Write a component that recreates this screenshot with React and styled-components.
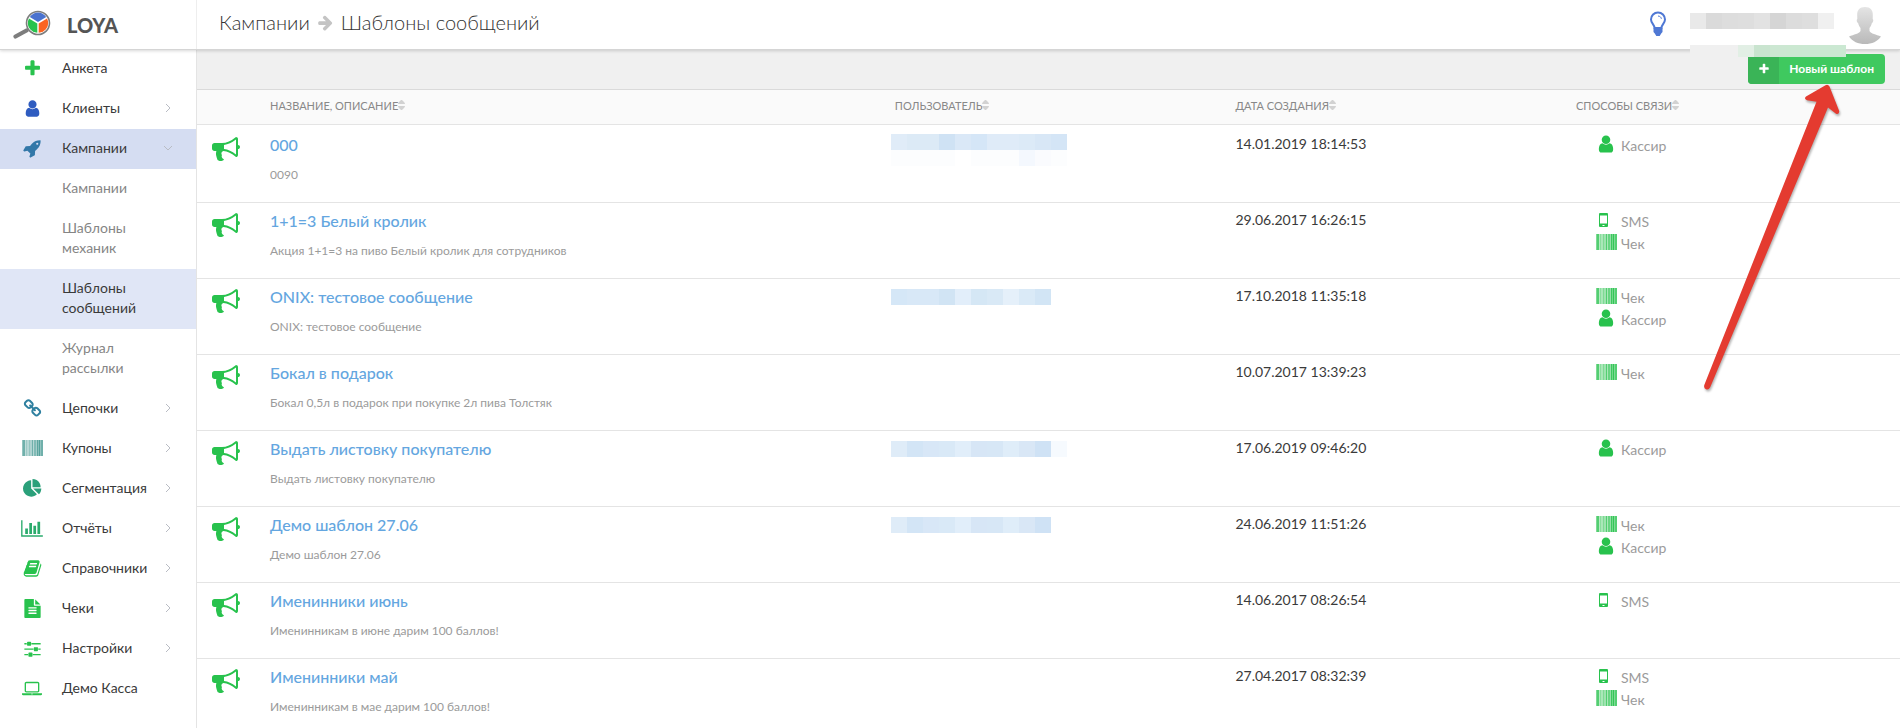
import React, { useState } from 'react';
import styled, { createGlobalStyle, css } from 'styled-components';

const colors = {
  green: '#28c24d',
  button: '#3fc95f',
  buttonDark: '#3ab457',
  link: '#64a6e0',
  text: '#3a3a3a',
  muted: '#9b9b9b',
  border: '#e4e4e4',
  grey: '#f0f0f0',
};

const GlobalStyle = createGlobalStyle`
  * {
    box-sizing: border-box;
  }

  body {
    margin: 0;
    background: #ffffff;
    color: ${colors.text};
    font-family: Lato, 'Open Sans', sans-serif;
    font-size: 14px;
    line-height: 20px;
  }

  a {
    color: inherit;
    text-decoration: none;
  }
`;

const glyphs = {
  plus: {
    path:
      'M1600 736v192q0 40-28 68t-68 28h-416v416q0 40-28 68t-68 28h-192q-40 0-68-28t-28-68v-416h-416q-40 0-68-28t-28-68v-192q0-40 28-68t68-28h416v-416q0-40 28-68t68-28h192q40 0 68 28t28 68v416h416q40 0 68 28t28 68z',
  },
  user: {
    path:
      'M1536 1399q0 109-62.5 187t-150.5 78h-854q-88 0-150.5-78t-62.5-187q0-85 8.5-160.5t31.5-152 58.5-131 94-89 134.5-34.5q131 128 313 128t313-128q76 0 134.5 34.5t94 89 58.5 131 31.5 152 8.5 160.5zm-256-887q0 159-112.5 271.5t-271.5 112.5-271.5-112.5-112.5-271.5 112.5-271.5 271.5-112.5 271.5 112.5 112.5 271.5z',
  },
  rocket: {
    path:
      'M1440 448q0-40-28-68t-68-28-68 28-28 68 28 68 68 28 68-28 28-68zm224-288q0 249-75.5 430.5t-253.5 360.5q-81 80-195 176l-20 379q-2 16-16 26l-384 224q-7 4-16 4-12 0-23-9l-64-64q-13-14-8-32l85-276-281-281-276 85q-3 1-9 1-14 0-23-9l-64-64q-17-19-5-39l224-384q10-14 26-16l379-20q96-114 176-195 188-187 358-258t431-71q14 0 24 9.5t10 22.5z',
  },
  link: {
    path:
      'M1520 1216q0-40-28-68l-208-208q-28-28-68-28-42 0-72 32 3 3 19 18.5t21.5 21.5 15 19 13 25.5 3.5 27.5q0 40-28 68t-68 28q-15 0-27.5-3.5t-25.5-13-19-15-21.5-21.5-18.5-19q-33 31-33 73 0 40 28 68l206 207q27 27 68 27 40 0 68-26l147-146q28-28 28-67zm-703-705q0-40-28-68l-206-207q-28-28-68-28-39 0-68 27l-147 146q-28 28-28 67 0 40 28 68l208 208q27 27 68 27 42 0 72-31-3-3-19-18.5t-21.5-21.5-15-19-13-25.5-3.5-27.5q0-40 28-68t68-28q15 0 27.5 3.5t25.5 13 19 15 21.5 21.5 18.5 19q33-31 33-73zm895 705q0 120-85 203l-147 146q-83 83-203 83-121 0-204-85l-206-207q-83-83-83-203 0-123 88-209l-88-88q-86 88-208 88-120 0-204-84l-208-208q-84-84-84-204t85-203l147-146q83-83 203-83 121 0 204 85l206 207q83 83 83 203 0 123-88 209l88 88q86-88 208-88 120 0 204 84l208 208q84 84 84 204z',
  },
  pie: {
    path:
      'M768 890l546 546q-106 108-247.5 168t-298.5 60q-209 0-385.5-103t-279.5-279.5-103-385.5 103-385.5 279.5-279.5 385.5-103v762zm187 6h773q0 157-60 298.5t-168 247.5zm709-128h-768v-768q209 0 385.5 103t279.5 279.5 103 385.5z',
  },
  bars: {
    width: 2048,
    path:
      'M640 896v512h-256v-512h256zm384-512v1024h-256v-1024h256zm1024 1152v128h-2048v-1536h128v1408h1920zm-640-896v768h-256v-768h256zm384-384v1152h-256v-1152h256z',
  },
  book: {
    path:
      'M1703 478q40 57 18 129l-275 906q-19 64-76.5 107.5t-122.5 43.5h-923q-77 0-148.5-53.5t-99.5-131.5q-24-67-2-127 0-4 3-27t4-37q1-8-3-21.5t-3-19.5q2-11 8-21t16.5-23.5 16.5-23.5q23-38 45-91.5t30-91.5q3-10 .5-30t-.5-28q3-11 17-28t17-23q21-36 42-92t25-90q1-9-2.5-32t.5-28q4-13 22-30.5t22-22.5q19-26 42.5-84.5t27.5-96.5q1-8-3-25.5t-2-26.5q2-8 9-18t18-23 17-21q8-12 16.5-30.5t15-35 16-36 19.5-32 26.5-23.5 36-11.5 47.5 5.5l-1 3q38-9 51-9h761q74 0 114 56t18 130l-274 906q-36 119-71.5 153.5t-128.5 34.5h-869q-27 0-38 15-11 16-1 43 24 70 144 70h923q29 0 56-15.5t35-41.5l300-987q7-22 5-57 38 15 59 43zm-1064 2q-4 13 2 22.5t20 9.5h608q13 0 25.5-9.5t16.5-22.5l21-64q4-13-2-22.5t-20-9.5h-608q-13 0-25.5 9.5t-16.5 22.5zm-83 256q-4 13 2 22.5t20 9.5h608q13 0 25.5-9.5t16.5-22.5l21-64q4-13-2-22.5t-20-9.5h-608q-13 0-25.5 9.5t-16.5 22.5z',
  },
  file: {
    path:
      'M1596 476q14 14 28 36h-472v-472q22 14 36 28zm-476 164h544v1056q0 40-28 68t-68 28h-1344q-40 0-68-28t-28-68v-1600q0-40 28-68t68-28h800v544q0 40 28 68t68 28zm160 736v-64q0-14-9-23t-23-9h-704q-14 0-23 9t-9 23v64q0 14 9 23t23 9h704q14 0 23-9t9-23zm0-256v-64q0-14-9-23t-23-9h-704q-14 0-23 9t-9 23v64q0 14 9 23t23 9h704q14 0 23-9t9-23zm0-256v-64q0-14-9-23t-23-9h-704q-14 0-23 9t-9 23v64q0 14 9 23t23 9h704q14 0 23-9t9-23z',
  },
  sliders: {
    path:
      'M480 1408v128h-352v-128h352zm352-128q26 0 45 19t19 45v256q0 26-19 45t-45 19h-256q-26 0-45-19t-19-45v-256q0-26 19-45t45-19h256zm160-384v128h-864v-128h864zm-640-512v128h-224v-128h224zm1312 1024v128h-736v-128h736zm-960-1152q26 0 45 19t19 45v256q0 26-19 45t-45 19h-256q-26 0-45-19t-19-45v-256q0-26 19-45t45-19h256zm640 512q26 0 45 19t19 45v256q0 26-19 45t-45 19h-256q-26 0-45-19t-19-45v-256q0-26 19-45t45-19h256zm320 128v128h-224v-128h224zm0-512v128h-864v-128h864z',
  },
  laptop: {
    width: 1920,
    path:
      'M416 1280q-66 0-113-47t-47-113v-704q0-66 47-113t113-47h1088q66 0 113 47t47 113v704q0 66-47 113t-113 47h-1088zm-32-864v704q0 13 9.5 22.5t22.5 9.5h1088q13 0 22.5-9.5t9.5-22.5v-704q0-13-9.5-22.5t-22.5-9.5h-1088q-13 0-22.5 9.5t-9.5 22.5zm1376 928h160v96q0 40-47 68t-113 28h-1600q-66 0-113-28t-47-68v-96h1760zm-720 96q16 0 16-16t-16-16h-160q-16 0-16 16t16 16h160z',
  },
  arrow: {
    path:
      'M1600 960q0 54-37 91l-651 651q-39 37-91 37-51 0-90-37l-75-75q-38-38-38-91t38-91l293-293h-704q-52 0-84.5-37.5t-32.5-90.5v-128q0-53 32.5-90.5t84.5-37.5h704l-293-294q-38-36-38-90t38-90l75-75q38-38 90-38 53 0 91 38l651 651q37 35 37 90z',
  },
  bullhorn: {
    path:
      'M1664 640q53 0 90.5 37.5t37.5 90.5-37.5 90.5-90.5 37.5v384q0 52-38 90t-90 38q-417-347-812-380-58 19-91 66t-31 100.5 40 92.5q-20 33-23 65.5t6 58 33.5 55 48 50 61.5 50.5q-29 58-111.5 83t-168.5 11.5-132-55.5q-7-23-29.5-87.5t-32-94.5-23-89-15-101 3.5-98.5 22-110.5h-122q-66 0-113-47t-47-113v-192q0-66 47-113t113-47h480q435 0 896-384 52 0 90 38t38 90v384zm-128 604v-954q-394 302-768 343v270q377 42 768 341z',
  },
};

const Glyph = ({ name, size }) => {
  const { path, width = 1792 } = glyphs[name];
  return (
    <svg
      width={Math.round((size * width) / 1792)}
      height={size}
      viewBox={`0 0 ${width} 1792`}
      fill="currentColor"
      aria-hidden="true"
    >
      <path d={path} />
    </svg>
  );
};

const stripes = [
  [0, 1, 0.6],
  [1, 2, 0.8],
  [3, 1, 0.35],
  [4, 1, 0.55],
  [5, 2, 0.4],
  [7, 1, 0.6],
  [8, 2, 0.45],
  [10, 1, 0.8],
  [11, 1, 0.4],
  [12, 2, 0.7],
  [14, 1, 0.5],
  [15, 1, 0.9],
  [16, 1, 0.65],
  [17, 1, 0.95],
  [18, 1, 0.6],
  [19, 2, 0.8],
];

const Barcode = () => (
  <svg width="21" height="16" viewBox="0 0 21 16" aria-hidden="true">
    {stripes.map(([x, width, opacity]) => (
      <rect
        key={x}
        x={x}
        width={width}
        height="16"
        fill="currentColor"
        opacity={opacity}
      />
    ))}
  </svg>
);

const Phone = () => (
  <svg width="9" height="14" viewBox="0 0 9 14" aria-hidden="true">
    <path
      d="M1 0h7q1 0 1 1v12q0 1-1 1h-7q-1 0-1-1v-12q0-1 1-1zM1 2.5v8h7v-8zM3.5 12v1h2v-1z"
      fill="currentColor"
      fillRule="evenodd"
    />
  </svg>
);

const Chevron = ({ open }) => (
  <svg width="10" height="10" viewBox="0 0 10 10" aria-hidden="true">
    <path
      d={open ? 'M1 3l4 4 4-4' : 'M3 1l4 4-4 4'}
      fill="none"
      stroke="#b9bcc4"
    />
  </svg>
);

const SortArrows = () => (
  <svg width="7" height="10" viewBox="0 0 7 10" aria-hidden="true">
    <path
      d="M0 4q0-1 1-2l2-2h1l2 2q1 1 1 2zM0 6h7q0 1-1 2l-2 2h-1l-2-2q-1-1-1-2z"
      fill="#d2d2d2"
    />
  </svg>
);

const Logo = () => (
  <svg width="38" height="30" viewBox="0 0 38 30" aria-hidden="true">
    <path
      d="M13.5 20.5L2.5 26.5"
      stroke="#7d7d7d"
      strokeWidth="4.2"
      strokeLinecap="round"
    />
    <circle
      cx="25"
      cy="13"
      r="11.5"
      fill="#fff"
      stroke="#7d7d7d"
      strokeWidth="1.6"
    />
    <path d="M25 12L16.8 7a9.7 9.7 0 0 1 16.4 0z" fill="#4a72cf" />
    <path d="M24.3 13.4v9.3a9.7 9.7 0 0 1-8.3-14.3z" fill="#28c24d" />
    <path d="M25.7 13.4v9.3a9.7 9.7 0 0 0 8.3-14.3z" fill="#fb6421" />
  </svg>
);

const Bulb = () => (
  <svg width="18" height="26" viewBox="0 0 18 26" aria-hidden="true">
    <path
      d="M9 1.500a7 7 0 0 0-7 7c0 3.500 3.300 5 3.600 8.500h6.800c.3-3.500 3.600-5 3.600-8.500A7 7 0 0 0 9 1.500z"
      fill="none"
      stroke="#4f78d4"
      strokeWidth="2"
    />
    <path d="M9 5c2 .2 3.200 1.200 3.400 2.800" fill="none" stroke="#4f78d4" />
    <path
      d="M4.500 16.500h9v4.500l-1.300 1.500-1.500 2.500H7.300L5.800 22.500 4.500 21z"
      fill="#4f78d4"
    />
  </svg>
);

const Avatar = () => (
  <svg width="34" height="38" viewBox="0 0 34 38" aria-hidden="true">
    <defs>
      <linearGradient id="avatar" x1="0" y1="0" x2="0" y2="1">
        <stop offset="0" stopColor="#e4e4e4" />
        <stop offset="1" stopColor="#b9b9b9" />
      </linearGradient>
    </defs>
    <path
      d="M17 0c5.500 0 8 3 7.800 8.500l-.1 3.500c1 .5.700 3.500-.9 4.200-.5 2.300-1.300 3.600-2.300 4.800v3c1.500 2.800 6.500 3.500 11.500 5.500-3.500 5-9 7.500-16 7.500S4.500 34.500 1 29.500c5-2 10-2.700 11.500-5.500v-3c-1-1.200-1.800-2.500-2.300-4.800-1.600-.7-1.900-3.700-.9-4.200l-.1-3.500C9 3 11.500 0 17 0z"
      fill="url(#avatar)"
    />
  </svg>
);

const Header = styled.header`
  position: relative;
  z-index: 2;
  display: flex;
  height: 50px;
  background: #ffffff;
  border-bottom: 1px solid #d5d5d5;
  box-shadow: 0 1px 3px rgba(0, 0, 0, 0.16);
`;

const Brand = styled.a`
  display: flex;
  align-items: center;
  gap: 16px;
  width: 197px;
  padding-left: 13px;
  border-right: 1px solid #eeeeee;
  color: #555555;
  font-size: 20px;
  font-weight: 900;
`;

const Breadcrumbs = styled.nav`
  display: flex;
  flex: 1;
  align-items: center;
  gap: 7px;
  padding: 0 0 5px 22px;
  color: #333333;
  font-size: 20px;
  font-weight: 300;

  svg {
    color: #c4c4c4;
  }
`;

const Account = styled.div`
  display: flex;
  align-items: flex-start;
  padding: 7px 18px 0 0;
`;

const HelpButton = styled.button`
  margin: 4px 23px 0 0;
  padding: 0;
  border: 0;
  background: none;
  cursor: pointer;
`;

const AccountName = styled.div`
  width: 144px;
  margin: 6px 14px 0 0;
`;

const Mosaic = styled.div`
  display: flex;
`;

const Tile = styled.span`
  flex: none;
  width: 16px;
  height: ${({ $short }) => ($short ? '12px' : '16px')};
  background: ${({ $tone }) => $tone};
`;

const AccountNote = styled(Mosaic)`
  position: absolute;
  top: 45px;
  right: 54px;
  width: 156px;
  overflow: hidden;
`;

const Body = styled.div`
  display: flex;
`;

const Sidebar = styled.nav`
  flex: none;
  width: 197px;
  min-height: calc(100vh - 50px);
  margin-top: -1px;
  border-right: 1px solid ${colors.border};
`;

const MenuList = styled.ul`
  margin: 0;
  padding: 0;
  list-style: none;
`;

const MenuLink = styled.a`
  display: grid;
  grid-template-columns: 24px minmax(0, 1fr) 10px;
  align-items: center;
  column-gap: 18px;
  padding: 9px 23px 11px 20px;
  background: ${({ $active }) => ($active ? '#d5ddf2' : 'transparent')};

  &:hover {
    background: #d5ddf2;
  }
`;

const MenuIcon = styled.span`
  display: flex;
  justify-content: center;
  color: ${({ $tone }) => $tone};
`;

const MenuLabel = styled.span`
  white-space: nowrap;
`;

const SubLink = styled.a`
  display: block;
  padding: 9px 50px 11px 62px;
  color: #858585;

  ${({ $active }) =>
    $active &&
    css`
      background: #e0e6f6;
      color: ${colors.text};
    `};
`;

const Content = styled.main`
  flex: 1;
  min-width: 0;
`;

const Toolbar = styled.div`
  display: flex;
  justify-content: flex-end;
  padding: 4px 15px 5px;
  background: ${colors.grey};
  border-bottom: 1px solid #dadada;
`;

const NewButton = styled.button`
  display: flex;
  height: 30px;
  padding: 0;
  overflow: hidden;
  border: 0;
  border-radius: 4px;
  background: ${colors.button};
  color: #ffffff;
  font: inherit;
  font-size: 12px;
  font-weight: 700;
  line-height: 30px;
  cursor: pointer;
`;

const NewButtonIcon = styled.span`
  display: flex;
  align-items: center;
  justify-content: center;
  width: 31px;
  height: 30px;
  background: ${colors.buttonDark};
`;

const NewButtonText = styled.span`
  padding: 0 11px 0 10px;
`;

const Table = styled.table`
  width: 100%;
  table-layout: fixed;
  border-collapse: separate;
  border-spacing: 0;
`;

const HeadCell = styled.th`
  width: ${({ $size }) => $size};
  height: 35px;
  padding: 0 8px 2px;
  background: #fafafa;
  border-bottom: 1px solid ${colors.border};
  color: #888888;
  font-size: 11px;
  font-weight: 400;
  text-align: left;
  text-transform: uppercase;
`;

const Cell = styled.td`
  height: 76px;
  padding: 7px 8px 0;
  border-bottom: 1px solid ${colors.border};
  vertical-align: top;

  tr:first-child > & {
    height: 78px;
    padding-top: 9px;
  }
`;

const IconCell = styled(Cell)`
  padding-left: 15px;
  color: ${colors.green};

  svg {
    display: block;
    margin-top: 1px;
  }
`;

const UserCell = styled(Cell)`
  padding: 10px 4px 0;
`;

const TemplateLink = styled.a`
  display: block;
  margin-bottom: 9px;
  color: ${colors.link};
  font-size: 16px;
  font-weight: 500;
  line-height: 22px;

  &:hover {
    text-decoration: underline;
  }
`;

const Description = styled.div`
  color: ${colors.muted};
  font-size: 12px;
`;

const Channels = styled.ul`
  margin: 0;
  padding: 0 0 0 20px;
  list-style: none;
`;

const Channel = styled.li`
  display: flex;
  gap: 4px;
  height: 22px;
  color: ${colors.muted};
  line-height: 24px;
`;

const ChannelIcon = styled.span`
  display: flex;
  align-items: center;
  width: 21px;
  height: 19px;
  padding-left: ${({ $inset }) => $inset};
  color: ${colors.green};

  svg {
    flex: none;
  }
`;

const Pointer = styled.svg`
  position: absolute;
  top: 82px;
  right: 58px;
  z-index: 3;
  filter: drop-shadow(1px 2px 1px rgba(0, 0, 0, 0.3));
  pointer-events: none;
`;

const menu = [
  { label: 'Анкета', icon: 'plus', tone: '#28c24d', leaf: true },
  { label: 'Клиенты', icon: 'user', tone: '#2f5cc0' },
  {
    label: 'Кампании',
    icon: 'rocket',
    tone: '#3277a8',
    children: [
      'Кампании',
      'Шаблоны механик',
      'Шаблоны сообщений',
      'Журнал рассылки',
    ],
  },
  { label: 'Цепочки', icon: 'link', tone: '#2f80a0' },
  { label: 'Купоны', icon: 'barcode', tone: '#4c9c96' },
  { label: 'Сегментация', icon: 'pie', tone: '#2ba07a' },
  { label: 'Отчёты', icon: 'bars', tone: '#2aab6c' },
  { label: 'Справочники', icon: 'book', tone: '#28c24d' },
  { label: 'Чеки', icon: 'file', tone: '#28c24d' },
  { label: 'Настройки', icon: 'sliders', tone: '#28c24d' },
  { label: 'Демо Касса', icon: 'laptop', tone: '#28c24d', leaf: true },
];

const accountTones = ['#e9e9e9', '#dadada', '#dddddd', '#dedede', '#e2e2e2', '#d5d5d5', '#dcdcdc', '#dedede', '#f0f0f0'];
const noteTones = ['#f0f0f0', '#f0f0f0', '#f0f0f0', '#e2efe5', '#c9e4cf', '#cce7d2', '#cbe8d1', '#cbe8d2', '#cbe8d2', '#cbe8d2'];
const shortName = ['#dfecf8', '#d3e5f6', '#d8e7f7', '#d9e9f7', '#e1eefa', '#d7e6f6', '#d7e7f6', '#dfedf9', '#d9e7f6', '#cfe2f5'];

const templates = [
  {
    title: '000',
    description: '0090',
    user: ['#e0ecf8', '#dceaf6', '#dceaf6', '#cfe2f4', '#dae8f7', '#d5e6f7', '#dfebf8', '#dfebf8', '#dceaf7', '#d8e7f6', '#d4e5f6'],
    userNote: ['#fcfdfe', '#fcfdfe', '#fcfdfe', '#fcfdfe', '#ffffff', '#fcfdfe', '#fcfdfe', '#fcfdfe', '#f4f8fe', '#fafbfe', '#fcfdfe'],
    created: '14.01.2019 18:14:53',
    channels: ['Кассир'],
  },
  {
    title: '1+1=3 Белый кролик',
    description: 'Акция 1+1=3 на пиво Белый кролик для сотрудников',
    created: '29.06.2017 16:26:15',
    channels: ['SMS', 'Чек'],
  },
  {
    title: 'ONIX: тестовое сообщение',
    description: 'ONIX: тестовое сообщение',
    user: ['#d5e7f7', '#d8e8f7', '#d8e8f7', '#d1e4f4', '#e2eefa', '#d5e7f5', '#d9e9f6', '#e5f0fa', '#daeaf7', '#d2e5f5'],
    created: '17.10.2018 11:35:18',
    channels: ['Чек', 'Кассир'],
  },
  {
    title: 'Бокал в подарок',
    description: 'Бокал 0,5л в подарок при покупке 2л пива Толстяк',
    created: '10.07.2017 13:39:23',
    channels: ['Чек'],
  },
  {
    title: 'Выдать листовку покупателю',
    description: 'Выдать листовку покупателю',
    user: [...shortName, '#f6fafe'],
    created: '17.06.2019 09:46:20',
    channels: ['Кассир'],
  },
  {
    title: 'Демо шаблон 27.06',
    description: 'Демо шаблон 27.06',
    user: shortName,
    created: '24.06.2019 11:51:26',
    channels: ['Чек', 'Кассир'],
  },
  {
    title: 'Именинники июнь',
    description: 'Именинникам в июне дарим 100 баллов!',
    created: '14.06.2017 08:26:54',
    channels: ['SMS'],
  },
  {
    title: 'Именинники май',
    description: 'Именинникам в мае дарим 100 баллов!',
    created: '27.04.2017 08:32:39',
    channels: ['SMS', 'Чек'],
  },
];

const channelIcons = {
  Кассир: { inset: '0', icon: <Glyph name="user" size={20} /> },
  SMS: { inset: '3px', icon: <Phone /> },
  Чек: { inset: '0', icon: <Barcode /> },
};

const Tiles = ({ tones, short }) =>
  tones.map((tone, index) => <Tile key={index} $tone={tone} $short={short} />);

const MenuItem = ({ item, open, onToggle }) => (
  <li>
    <MenuLink href="#" $active={open} onClick={onToggle}>
      <MenuIcon $tone={item.tone}>
        {item.icon === 'barcode' ? (
          <Barcode />
        ) : (
          <Glyph name={item.icon} size={19} />
        )}
      </MenuIcon>
      <MenuLabel>{item.label}</MenuLabel>
      {!item.leaf && <Chevron open={open} />}
    </MenuLink>
    {open && item.children && (
      <MenuList>
        {item.children.map(child => (
          <li key={child}>
            <SubLink href="#" $active={child === 'Шаблоны сообщений'}>
              {child}
            </SubLink>
          </li>
        ))}
      </MenuList>
    )}
  </li>
);

const TemplateRow = ({ template }) => (
  <tr>
    <IconCell>
      <Glyph name="bullhorn" size={28} />
    </IconCell>
    <Cell>
      <TemplateLink href="#">{template.title}</TemplateLink>
      <Description>{template.description}</Description>
    </Cell>
    <UserCell>
      {template.user && (
        <Mosaic>
          <Tiles tones={template.user} />
        </Mosaic>
      )}
      {template.userNote && (
        <Mosaic>
          <Tiles tones={template.userNote} />
        </Mosaic>
      )}
    </UserCell>
    <Cell>{template.created}</Cell>
    <Cell>
      <Channels>
        {template.channels.map(channel => (
          <Channel key={channel}>
            <ChannelIcon $inset={channelIcons[channel].inset}>
              {channelIcons[channel].icon}
            </ChannelIcon>
            {channel}
          </Channel>
        ))}
      </Channels>
    </Cell>
  </tr>
);

const App = () => {
  const [opened, setOpened] = useState('Кампании');

  return (
    <>
      <GlobalStyle />
      <Header>
        <Brand href="#">
          <Logo />
          LOYA
        </Brand>
        <Breadcrumbs>
          <a href="#">Кампании</a>
          <Glyph name="arrow" size={17} />
          <span>Шаблоны сообщений</span>
        </Breadcrumbs>
        <Account>
          <HelpButton type="button" aria-label="Помощь">
            <Bulb />
          </HelpButton>
          <AccountName>
            <Mosaic>
              <Tiles tones={accountTones} />
            </Mosaic>
          </AccountName>
          <Avatar />
        </Account>
        <AccountNote>
          <Tiles tones={noteTones} short />
        </AccountNote>
      </Header>
      <Body>
        <Sidebar>
          <MenuList>
            {menu.map(item => (
              <MenuItem
                key={item.label}
                item={item}
                open={opened === item.label}
                onToggle={() =>
                  setOpened(opened === item.label ? '' : item.label)
                }
              />
            ))}
          </MenuList>
        </Sidebar>
        <Content>
          <Toolbar>
            <NewButton type="button">
              <NewButtonIcon>
                <Glyph name="plus" size={12} />
              </NewButtonIcon>
              <NewButtonText>Новый шаблон</NewButtonText>
            </NewButton>
          </Toolbar>
          <Table>
            <thead>
              <tr>
                <HeadCell $size="65px" />
                <HeadCell>
                  Название, описание
                  <SortArrows />
                </HeadCell>
                <HeadCell $size="20%">
                  Пользователь
                  <SortArrows />
                </HeadCell>
                <HeadCell $size="20%">
                  Дата создания
                  <SortArrows />
                </HeadCell>
                <HeadCell $size="332px">
                  Способы связи
                  <SortArrows />
                </HeadCell>
              </tr>
            </thead>
            <tbody>
              {templates.map(template => (
                <TemplateRow key={template.title} template={template} />
              ))}
            </tbody>
          </Table>
        </Content>
      </Body>
      <Pointer
        width="140"
        height="312"
        viewBox="0 0 140 312"
        aria-hidden="true"
      >
        <path
          d="M127.500 4.500q-1.500-2.500-4-1.300L104 14.500q-2.500 2.500 1 3.700l9.500 1.600L2.300 303q-.8 3.200 1.700 4.200t4.200-2L126 25.500l8 6.300q3.500 1.200 3.200-2.800z"
          fill="#e43b30"
        />
      </Pointer>
    </>
  );
};

export default App;
